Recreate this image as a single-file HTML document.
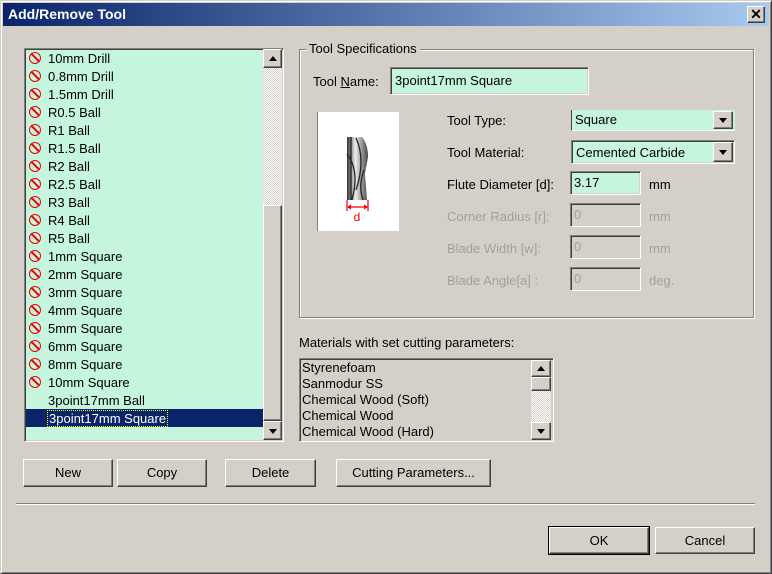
<!DOCTYPE html>
<html><head><style>
*{box-sizing:border-box;margin:0;padding:0}
body{width:772px;height:574px;background:#d4d0c8;font-family:"Liberation Sans",sans-serif;font-size:13px;color:#000;position:relative;overflow:hidden}
.a{position:absolute}
.win{left:0;top:0;width:772px;height:574px;border:1px solid;border-color:#d4d0c8 #404040 #404040 #d4d0c8;box-shadow:inset 1px 1px #fff,inset -1px -1px #808080}
.title{left:3px;top:3px;width:766px;height:23px;background:linear-gradient(90deg,#0a246a,#a6caf0);color:#fff;font-weight:bold;font-size:14px;line-height:23px;padding-left:5px}
.sunk{border:1px solid;border-color:#808080 #fff #fff #808080;box-shadow:inset 1px 1px #404040,inset -1px -1px #d4d0c8}
.btn{border:1px solid;border-color:#fff #404040 #404040 #fff;box-shadow:inset -1px -1px #808080;background:#d4d0c8;text-align:center}
.row{position:absolute;left:0;height:18px;line-height:19px;width:238px;padding-left:22px;white-space:nowrap}
.no{position:absolute;left:3px;top:3px;width:12px;height:12px;border:1.5px solid #e00;border-radius:50%}
.no:after{content:"";position:absolute;left:4px;top:-1px;width:1.5px;height:11px;background:#e00;transform:rotate(-45deg)}
.chk{background-color:#e8e6e2;background-image:repeating-conic-gradient(#fff 0 25%,#d4d0c8 0 50%);background-size:2px 2px}
.lbl{position:absolute;left:447px}
.dis{color:#a0a0a0}
.tri{width:0;height:0;border-left:4px solid transparent;border-right:4px solid transparent;position:absolute;left:5px}
</style></head><body>
<div class="a win"></div>
<div class="a title">Add/Remove Tool</div>
<div class="a btn" style="left:747px;top:6px;width:18px;height:17px;font-weight:bold;font-size:14px;line-height:14px">✕</div>

<div class="a sunk" style="left:24px;top:48px;width:260px;height:394px;background:#c6f5de"></div>
<div class="a" style="left:26px;top:49px;width:237px;height:391px;overflow:hidden">
<div class="row" style="top:0"><span class="no"></span>10mm Drill</div>
<div class="row" style="top:18px"><span class="no"></span>0.8mm Drill</div>
<div class="row" style="top:36px"><span class="no"></span>1.5mm Drill</div>
<div class="row" style="top:54px"><span class="no"></span>R0.5 Ball</div>
<div class="row" style="top:72px"><span class="no"></span>R1 Ball</div>
<div class="row" style="top:90px"><span class="no"></span>R1.5 Ball</div>
<div class="row" style="top:108px"><span class="no"></span>R2 Ball</div>
<div class="row" style="top:126px"><span class="no"></span>R2.5 Ball</div>
<div class="row" style="top:144px"><span class="no"></span>R3 Ball</div>
<div class="row" style="top:162px"><span class="no"></span>R4 Ball</div>
<div class="row" style="top:180px"><span class="no"></span>R5 Ball</div>
<div class="row" style="top:198px"><span class="no"></span>1mm Square</div>
<div class="row" style="top:216px"><span class="no"></span>2mm Square</div>
<div class="row" style="top:234px"><span class="no"></span>3mm Square</div>
<div class="row" style="top:252px"><span class="no"></span>4mm Square</div>
<div class="row" style="top:270px"><span class="no"></span>5mm Square</div>
<div class="row" style="top:288px"><span class="no"></span>6mm Square</div>
<div class="row" style="top:306px"><span class="no"></span>8mm Square</div>
<div class="row" style="top:324px"><span class="no"></span>10mm Square</div>
<div class="row" style="top:342px">3point17mm Ball</div>
<div class="row" style="top:360px;background:#0a246a;color:#fff"><span style="outline:1px dotted #ff0;padding:0 1px">3point17mm Square</span></div>
</div>
<div class="a chk" style="left:263px;top:49px;width:19px;height:391px"></div>
<div class="a btn" style="left:263px;top:49px;width:19px;height:19px"><div class="tri" style="top:6px;border-bottom:5px solid #000"></div></div>
<div class="a btn" style="left:263px;top:205px;width:19px;height:216px"></div>
<div class="a btn" style="left:263px;top:421px;width:19px;height:19px"><div class="tri" style="top:7px;border-top:5px solid #000"></div></div>

<div class="a" style="left:299px;top:49px;width:455px;height:269px;border:1px solid #808080;box-shadow:1px 1px #fff,inset 1px 1px #fff"></div>
<div class="a" style="left:306px;top:41px;padding:0 3px;background:#d4d0c8">Tool Specifications</div>
<div class="a" style="left:313px;top:74px">Tool <u>N</u>ame:</div>
<div class="a sunk" style="left:390px;top:67px;width:199px;height:28px;background:#c6f5de;padding:5px 0 0 4px">3point17mm Square</div>

<div class="a" style="left:317px;top:112px;width:82px;height:119px;background:#fff;border-left:1px solid #808080">
<svg width="82" height="119" style="position:absolute;left:0;top:0">
<defs><linearGradient id="g" x1="0" x2="1"><stop offset="0" stop-color="#333"/><stop offset=".4" stop-color="#eee"/><stop offset="1" stop-color="#444"/></linearGradient></defs>
<path d="M29 25 L44 25 Q50 32 50 45 L47 62 L49 88 L29 88 Z" fill="url(#g)"/>
<path d="M29 42 Q42 58 34 88 M38 26 Q48 48 38 78 M46 58 Q40 74 45 88 M33 25 L33 88" stroke="#222" stroke-width="1.3" fill="none"/>
<path d="M29 88V99M50 88V99M30 95H49" stroke="#e00" stroke-width="1.2"/>
<path d="M29 95l4-2.5v5zM50 95l-4-2.5v5z" fill="#e00"/>
<text x="39" y="109" fill="#e00" font-size="12" text-anchor="middle" font-family="Liberation Sans">d</text>
</svg></div>

<div class="lbl" style="top:113px">Tool Type:</div>
<div class="lbl" style="top:145px">Tool Material:</div>
<div class="lbl" style="top:177px">Flute Diameter [d]:</div>
<div class="lbl dis" style="top:209px">Corner Radius [r]:</div>
<div class="lbl dis" style="top:241px">Blade Width [w]:</div>
<div class="lbl dis" style="top:273px">Blade Angle[a] :</div>

<div class="a" style="left:571px;top:110px;width:164px;height:21px;background:#c6f5de;border-left:1px solid #404040;border-bottom:1px solid #fff;padding:2px 0 0 3px">Square</div>
<div class="a btn" style="left:713px;top:111px;width:20px;height:18px"><div class="tri" style="left:5px;top:6px;border-top:5px solid #000"></div></div>
<div class="a sunk" style="left:571px;top:140px;width:164px;height:24px;background:#c6f5de;padding:4px 0 0 4px">Cemented Carbide</div>
<div class="a btn" style="left:713px;top:142px;width:20px;height:20px"><div class="tri" style="left:5px;top:7px;border-top:5px solid #000"></div></div>

<div class="a sunk" style="left:570px;top:171px;width:71px;height:24px;background:#c6f5de;padding:3px 0 0 3px">3.17</div>
<div class="a sunk dis" style="left:570px;top:203px;width:71px;height:24px;padding:3px 0 0 3px">0</div>
<div class="a sunk dis" style="left:570px;top:235px;width:71px;height:24px;padding:3px 0 0 3px">0</div>
<div class="a sunk dis" style="left:570px;top:267px;width:71px;height:24px;padding:3px 0 0 3px">0</div>
<div class="a" style="left:649px;top:177px">mm</div>
<div class="a dis" style="left:649px;top:209px">mm</div>
<div class="a dis" style="left:649px;top:241px">mm</div>
<div class="a dis" style="left:649px;top:273px">deg.</div>

<div class="a" style="left:299px;top:335px">Materials with set cutting parameters:</div>
<div class="a sunk" style="left:299px;top:358px;width:255px;height:84px;background:#d4d0c8"></div>
<div class="a" style="left:302px;top:360px;line-height:16px">Styrenefoam<br>Sanmodur SS<br>Chemical Wood (Soft)<br>Chemical Wood<br>Chemical Wood (Hard)</div>
<div class="a chk" style="left:531px;top:360px;width:20px;height:80px"></div>
<div class="a btn" style="left:531px;top:360px;width:20px;height:17px"><div class="tri" style="left:5px;top:5px;border-bottom:5px solid #000"></div></div>
<div class="a btn" style="left:531px;top:377px;width:20px;height:14px"></div>
<div class="a btn" style="left:531px;top:422px;width:20px;height:18px"><div class="tri" style="left:5px;top:6px;border-top:5px solid #000"></div></div>

<div class="a btn" style="left:23px;top:459px;width:90px;height:28px;line-height:26px">New</div>
<div class="a btn" style="left:117px;top:459px;width:90px;height:28px;line-height:26px">Copy</div>
<div class="a btn" style="left:225px;top:459px;width:91px;height:28px;line-height:26px">Delete</div>
<div class="a btn" style="left:336px;top:459px;width:155px;height:28px;line-height:26px">Cutting Parameters...</div>

<div class="a" style="left:16px;top:503px;width:739px;height:2px;border-top:1px solid #808080;border-bottom:1px solid #fff"></div>

<div class="a btn" style="left:549px;top:527px;width:100px;height:27px;line-height:25px;outline:1px solid #000">OK</div>
<div class="a btn" style="left:655px;top:527px;width:100px;height:27px;line-height:25px">Cancel</div>
</body></html>
